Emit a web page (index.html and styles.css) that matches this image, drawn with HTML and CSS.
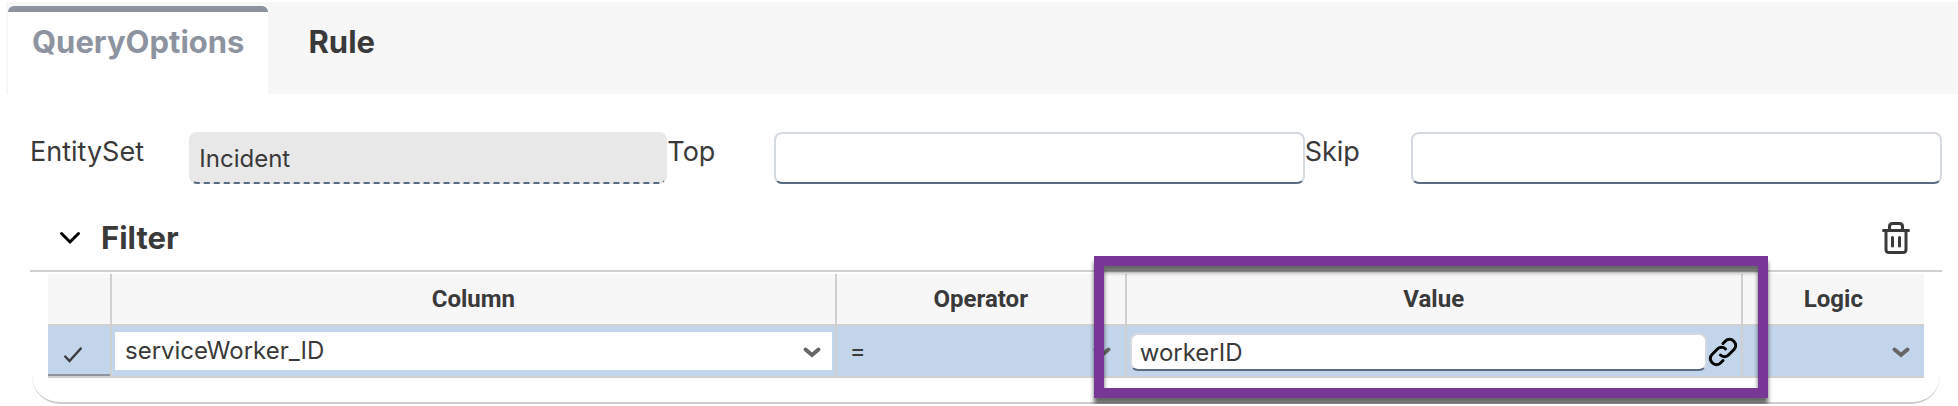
FILE: index.html
```html
<!DOCTYPE html>
<html lang="en">
<head>
<meta charset="utf-8">
<title>Query options</title>
<link rel="stylesheet" href="styles.css">
</head>
<body>
<nav class="tabs" role="tablist">
  <button class="tab tab-active" role="tab" aria-selected="true" type="button">QueryOptions</button>
  <button class="tab" role="tab" aria-selected="false" type="button">Rule</button>
</nav>
<main class="content">
  <form class="fields">
    <label for="entity">EntitySet</label>
    <input class="field field-readonly" id="entity" type="text" value="Incident" readonly>
    <label for="top">Top</label>
    <input class="field" id="top" type="text">
    <label for="skip">Skip</label>
    <input class="field" id="skip" type="text">
  </form>
  <section class="panel">
    <header class="panel-head">
      <button class="icon-button" type="button" aria-label="Collapse filter">
        <svg width="20" height="12" viewBox="0 0 20 12"><path d="M1.5 1.5 10 10l8.500-8.500" fill="none" stroke="#000" stroke-width="3" stroke-linecap="round"/></svg>
      </button>
      <h2 class="panel-title">Filter</h2>
      <button class="icon-button trash" type="button" aria-label="Delete filter">
        <svg width="28" height="32" viewBox="0 0 28 32" fill="none" stroke="#3a3a3a" stroke-width="3" stroke-linecap="round" stroke-linejoin="round"><path d="M1.500 8.500h25M7.500 8V4.500q0-3 3-3h7q3 0 3 3V8M4 9v18.500q0 3 3 3h14q3 0 3-3V9M10.500 15.500v8.500M17.500 15.500v8.500"/></svg>
      </button>
    </header>
    <div class="panel-body">
      <table class="grid">
        <colgroup><col class="c-mark"><col class="c-column"><col class="c-operator"><col class="c-value"><col class="c-logic"></colgroup>
        <thead>
          <tr>
            <td></td>
            <th scope="col">Column</th>
            <th scope="col">Operator</th>
            <th scope="col">Value<span class="callout"></span></th>
            <th scope="col">Logic</th>
          </tr>
        </thead>
        <tbody>
          <tr>
            <td class="mark">
              <label class="check"><input type="checkbox" checked aria-label="Select row">
                <svg width="18" height="16" viewBox="0 0 18 16"><path d="M1.200 9.500 5.500 14 16.800 1.500" fill="none" stroke="#3a3a3a" stroke-width="2.400" stroke-linecap="round"/></svg>
              </label>
            </td>
            <td><div class="picker picker-white"><select aria-label="Column"><option>serviceWorker_ID</option></select><svg class="caret" width="18" height="12" viewBox="0 0 18 12"><path d="M2.500 2.500 9 8l6.500-5.500" fill="none" stroke="#666" stroke-width="4" stroke-linecap="round"/></svg></div></td>
            <td><div class="picker"><select aria-label="Operator"><option>=</option></select><svg class="caret" width="18" height="12" viewBox="0 0 18 12"><path d="M2.500 2.500 9 8l6.500-5.500" fill="none" stroke="#666" stroke-width="4" stroke-linecap="round"/></svg></div></td>
            <td>
              <div class="value">
                <input class="value-input" type="text" value="workerID" aria-label="Value">
                <button class="icon-button link" type="button" aria-label="Link value">
                  <svg width="28" height="28" viewBox="0 0 28 28" fill="none" stroke="#000" stroke-width="3" stroke-linecap="round"><path d="M14 5.500 16.500 3a5.600 5.600 0 0 1 8 0l.5.500a5.600 5.600 0 0 1 0 8L19.500 17a5.600 5.600 0 0 1-8 0"/><path d="M14 22.500 11.500 25a5.600 5.600 0 0 1-8 0L3 24.500a5.600 5.600 0 0 1 0-8L8.500 11a5.600 5.600 0 0 1 8 0"/></svg>
                </button>
              </div>
            </td>
            <td><div class="picker"><select aria-label="Logic"><option></option></select><svg class="caret" width="18" height="12" viewBox="0 0 18 12"><path d="M2.500 2.500 9 8l6.500-5.500" fill="none" stroke="#666" stroke-width="4" stroke-linecap="round"/></svg></div></td>
          </tr>
        </tbody>
      </table>
    </div>
  </section>
</main>
</body>
</html>
```
FILE: styles.css
```css
* { box-sizing: border-box; }
body {
  margin: 0;
  background: #fff;
  color: #3a3a3a;
  font-family: Inter, "Liberation Sans", sans-serif;
}
button, input, select { font: inherit; color: inherit; }
svg { display: block; overflow: visible; }

.tabs {
  display: flex;
  margin: 2px 0 0 6px;
  padding: 4px 2px 0;
  background: #f7f7f7;
}
.tab {
  height: 88px;
  padding: 0 24px 22px;
  border: 0;
  border-top: 6px solid transparent;
  background: none;
  font-size: 31px;
  font-weight: 700;
  line-height: 40px;
}
.tab + .tab { margin-left: 16px; }
.tab-active {
  border-top-color: #8d949f;
  border-radius: 6px 6px 0 0;
  background: #fff;
  color: #8d949f;
}

.content { padding: 38px 16px 0 30px; }
.fields {
  display: grid;
  grid-template-columns: 3fr 9fr 2fr 10fr 2fr 10fr;
  font-size: 27px;
  line-height: 40px;
}
.field {
  width: 100%;
  min-width: 0;
  height: 52px;
  padding: 0 8px;
  border: 2px solid #d5dae0;
  border-bottom-color: #596b80;
  border-radius: 8px;
  background: #fff;
  font-size: 24px;
}
.field-readonly {
  border-color: #e8e8e8;
  border-bottom: 2px dashed #596b80;
  background: #e8e8e8;
}

.panel-head {
  display: flex;
  align-items: center;
  height: 88px;
  padding: 22px 32px 0 30px;
  border-bottom: 2px solid #d0d0d0;
}
.panel-title {
  margin: 0 auto 0 21px;
  font-size: 31px;
  line-height: 40px;
}
.icon-button {
  padding: 0;
  border: 0;
  background: none;
}

.panel-body {
  margin: 0 2px;
  padding: 2px 16px 24px;
  border-bottom: 2px solid #ccc;
  border-radius: 0 0 28px 28px;
}
.grid {
  width: 100%;
  table-layout: fixed;
  border-spacing: 0;
  font-size: 24px;
}
.c-mark { width: 64px; }
.c-column { width: 40%; }
.c-operator { width: 16%; }
.c-value { width: 34%; }
.c-logic { width: 10%; }
.grid th, .grid td {
  padding: 0;
  border-right: 2px solid #d0d0d0;
  border-bottom: 2px solid #d0d0d0;
}
.grid th:last-child, .grid td:last-child { border-right: 0; }
.grid thead tr { height: 52px; background: #f7f7f7; }
.grid tbody tr { height: 52px; background: #c3d5eb; }
.grid th {
  position: relative;
  font-family: Roboto, "Liberation Sans", sans-serif;
}
.grid .mark { box-shadow: inset 0 -2px #8d949f; }
.check {
  display: flex;
  justify-content: center;
  padding: 8px 12px 0 0;
}
.check input {
  appearance: none;
  width: 0;
  margin: 0;
}

.picker {
  position: relative;
  height: 38px;
  margin: 0 3px;
}
.picker select {
  appearance: none;
  width: 100%;
  height: 100%;
  padding: 0 40px 2px 10px;
  border: 0;
  background: none;
}
.picker-white { background: #fff; }
.caret {
  position: absolute;
  top: 15px;
  right: 11px;
}
.value {
  display: flex;
  align-items: center;
  gap: 2px;
  padding: 2px 4px 0 3px;
}
.value-input {
  flex: 1;
  min-width: 0;
  height: 38px;
  padding: 0 8px;
  border: 2px solid #d5dae0;
  border-bottom-color: #596b80;
  border-radius: 8px;
  background: #fff;
}

/* Highlight frame around the Value column */
.callout {
  position: absolute;
  z-index: 1;
  top: -18px;
  left: -33px;
  right: -27px;
  height: 142px;
  border: 10px solid #783697;
  filter: drop-shadow(0 6px 2px rgba(0, 0, 0, 0.6));
  pointer-events: none;
}
```
